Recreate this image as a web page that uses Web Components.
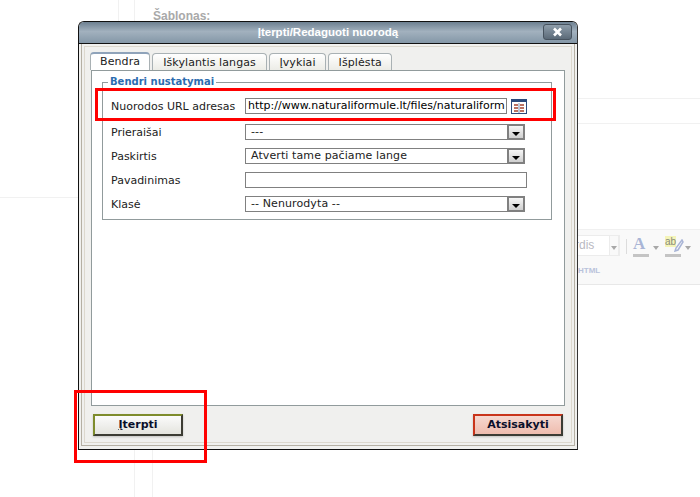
<!DOCTYPE html>
<html lang="lt">
<head>
<meta charset="utf-8">
<title>Įterpti/Redaguoti nuorodą</title>
<style>
  html, body { margin: 0; height: 100%; background: #fff; overflow: hidden; }
</style>
</head>
<body>
<editor-backdrop></editor-backdrop>
<link-dialog></link-dialog>
<mark-box style="left:95px;top:88px;width:455px;height:27px"></mark-box>
<mark-box style="left:74px;top:390px;width:127px;height:67px"></mark-box>

<script>
//////////////////////
// editor-backdrop
//////////////////////

class EditorBackdrop extends HTMLElement {
  constructor() {
    super();
    this.attachShadow({ mode: "open" });
    this.shadowRoot.innerHTML = `<style>
      :host { display: block; position: absolute; inset: 0; font-family: "Liberation Sans", sans-serif; }
      .line { position: absolute; background: #f1f1f1; }
      .title { position: absolute; left: 153px; top: 9px; font-size: 12px; font-weight: bold; color: #a9a9a9; }
      .bar { position: absolute; left: 570px; right: 0; top: 229px; height: 56px; background: #f9f9f9; border-top: 1px solid #f0f0f0; border-bottom: 1px solid #e8e8e8; box-sizing: border-box; }
      .font { position: absolute; left: 0; top: 5px; width: 50px; height: 21px; background: #fff; border: 1px solid #ececec; box-sizing: border-box; font-size: 12px; line-height: 19px; color: #b9b9c2; padding-left: 4px; }
      .drop { position: absolute; left: 39px; top: 5px; width: 10px; height: 21px; box-sizing: border-box; background: #f9f9f9; border: 1px solid #ececec; }
      .arrow { position: absolute; top: 16px; width: 0; height: 0; border: 3px solid transparent; border-top: 4px solid #a8a8a8; border-bottom: 0; }
      .sep { position: absolute; left: 56px; top: 9px; width: 1px; height: 15px; background: #dcdcdc; }
      .a { position: absolute; left: 63px; top: 5px; font: bold 17px/18px "Liberation Serif", serif; color: #a9b5d6; }
      .u { position: absolute; left: 63px; top: 24px; width: 16px; height: 3px; background: #c4c4c4; }
      .ab { position: absolute; left: 95px; top: 6px; font-size: 10px; line-height: 11px; color: #8b8b7a; background: #f4f4b8; }
      .pen { position: absolute; left: 104px; top: 9px; }
      .u2 { position: absolute; left: 95px; top: 24px; width: 16px; height: 3px; background: #c4c4c4; }
      .html { position: absolute; left: 8px; top: 36px; font-size: 8px; font-weight: bold; color: #b9c3dc; }
    </style>
    <div class="line" style="left:118px;top:0;width:1px;height:22px"></div>
    <div class="line" style="left:134px;top:0;width:1px;height:22px"></div>
    <div class="line" style="left:134px;top:450px;width:1px;height:47px"></div>
    <div class="line" style="left:152px;top:450px;width:1px;height:47px"></div>
    <div class="line" style="left:0;top:197px;width:78px;height:1px"></div>
    <div class="line" style="left:578px;top:98px;right:0;height:1px"></div>
    <div class="line" style="left:578px;top:123px;right:0;height:1px"></div>
    <div class="title">Šablonas:</div>
    <div class="bar">
      <div class="font">rdis</div>
      <div class="drop"></div>
      <div class="arrow" style="left:41px"></div>
      <div class="sep"></div>
      <div class="a">A</div><div class="u"></div>
      <div class="arrow" style="left:83px"></div>
      <div class="ab">ab</div>
      <svg class="pen" width="10" height="13" viewBox="0 0 10 13"><path d="M8 1 2 9l-1 3 3-1 5-8z" fill="none" stroke="#a9b5d6" stroke-width="1.5"/></svg>
      <div class="u2"></div>
      <div class="arrow" style="left:115px"></div>
      <div class="html">HTML</div>
    </div>`;
  }
}

//////////////////////
// mark-box
//////////////////////

class MarkBox extends HTMLElement {
  constructor() {
    super();
    this.attachShadow({ mode: "open" });
    this.shadowRoot.innerHTML = `<style>
      :host { display: block; position: absolute; border: 3px solid #f00; pointer-events: none; }
    </style>`;
  }
}

//////////////////////
// dialog-tab
//////////////////////

class DialogTab extends HTMLElement {
  constructor() {
    super();
    this.attachShadow({ mode: "open" });
    this.shadowRoot.innerHTML = `<style>
      :host {
        display: block; box-sizing: border-box; height: 17px; margin-top: 1px; padding: 0 10px;
        border: 1px solid #a9b1b4; border-bottom: 0; border-radius: 4px 4px 0 0; white-space: nowrap;
        background: linear-gradient(#fff, #ecece6); font-size: 11px; line-height: 17px; letter-spacing: .1px; color: #222;
      }
      :host([active]) {
        height: 18px; margin-top: 0; margin-bottom: -1px; position: relative; background: #fff;
        border-top: 2px solid #8fa3ba; padding: 0 9px; line-height: 16px;
      }
      :host([narrow]) { padding: 0 9.5px; }
    </style><slot></slot>`;
  }
}

//////////////////////
// form-row
//////////////////////

class FormRow extends HTMLElement {
  constructor() {
    super();
    this.attachShadow({ mode: "open" });
    this.shadowRoot.innerHTML = `<style>
      :host { display: flex; align-items: center; height: 24px; font-size: 11px; color: #222; }
      .label { width: 134px; flex: none; white-space: nowrap; }
      .field { display: flex; align-items: center; gap: 4px; }
    </style>
    <div class="label">${this.getAttribute("label") || ""}</div>
    <div class="field"><slot></slot></div>`;
  }
}

//////////////////////
// text-box
//////////////////////

class TextBox extends HTMLElement {
  constructor() {
    super();
    this.attachShadow({ mode: "open" });
    this.shadowRoot.innerHTML = `<style>
      :host {
        display: block; box-sizing: border-box; height: 16px; border: 1px solid #808080; background: #fff;
        padding-left: 2px; font-size: 11px; line-height: 14px; color: #000;
        white-space: nowrap;
      }
    </style><slot></slot>`;
  }
}

//////////////////////
// select-box
//////////////////////

class SelectBox extends HTMLElement {
  constructor() {
    super();
    this.attachShadow({ mode: "open" });
    this.shadowRoot.innerHTML = `<style>
      :host {
        display: flex; box-sizing: border-box; width: 280px; height: 16px; border: 1px solid #808080; background: #fff;
        padding-left: 5px; font-size: 11px; line-height: 14px; letter-spacing: .1px; color: #222;
      }
      .text { flex: 1; white-space: nowrap; }
      .btn {
        flex: none; width: 18px; height: 16px; margin: -1px -1px 0 0; box-sizing: border-box; border: 2px solid #808080;
        background: linear-gradient(#f6f6f6, #cfcfcf); display: flex; align-items: center; justify-content: center;
      }
      .btn i { width: 0; height: 0; border: 4px solid transparent; border-top: 4px solid #000; border-bottom: 0; margin-top: 3px; }
    </style><div class="text"><slot></slot></div><div class="btn"><i></i></div>`;
  }
}

//////////////////////
// dialog-button
//////////////////////

class DialogButton extends HTMLElement {
  constructor() {
    super();
    this.attachShadow({ mode: "open" });
    const red = this.hasAttribute("danger");
    this.shadowRoot.innerHTML = `<style>
      :host {
        display: block; box-sizing: border-box; width: 90px; height: 22px; text-align: center;
        border: 2px solid ${red ? "#c9341a" : "#7e8c2c"}; border-right-color: #3c3c34; border-bottom-color: #3c3c34;
        background: linear-gradient(${red ? "#f6d8d0, #eebcae" : "#fbfbfb, #e4e4de"});
        box-shadow: 0 1px 2px rgba(0,0,0,.2);
        font-size: 11px; font-weight: bold; line-height: 18px; color: #0a0f2a;
      }
    </style><slot></slot>`;
  }
}

//////////////////////
// link-dialog
//////////////////////

class LinkDialog extends HTMLElement {
  constructor() {
    super();
    this.attachShadow({ mode: "open" });
    this.shadowRoot.innerHTML = `<style>
      :host {
        display: flex; flex-direction: column; position: absolute; left: 78px; top: 21px; width: 500px; height: 429px; box-sizing: border-box;
        border: 1px solid #111; border-right-color: #333; border-radius: 6px 6px 0 0; background: #f0f0ee;
        font-family: "DejaVu Sans", Verdana, sans-serif; overflow: hidden;
      }
      .title {
        flex: none; position: relative; height: 22px; box-sizing: border-box; border-bottom: 1px solid #111;
        background: linear-gradient(#6d8091, #a2b1be 45%, #8497a7);
        color: #fff; text-align: center; font: bold 11.5px/20px "Liberation Sans", sans-serif;
      }
      .close {
        position: absolute; right: 5px; top: 2px; width: 29px; height: 16px; box-sizing: border-box;
        border: 1px solid #47535f; border-radius: 3px; background: linear-gradient(#8e9daa, #5b6a78);
        display: flex; align-items: center; justify-content: center;
      }
      .frame {
        flex: 1; display: flex; flex-direction: column; min-height: 0; margin: 0 2px 3px; padding: 8px 8px 9px 9px;
        border: 1px solid #b5b0a4; border-top: 0; outline: 0; box-shadow: inset 0 0 0 2px #f0f0ee, inset 0 0 0 3px #dcd8ce;
      }
      .tabs { display: flex; gap: 2px; flex: none; height: 18px; margin-left: -1px; }
      .panel {
        flex: 1; min-height: 0; margin-right: 1px; padding: 11px 10px; border: 1px solid #919b9c; background: #fff;
      }
      .group { position: relative; margin-right: 2px; height: 138px; box-sizing: border-box; border: 1px solid #919b9c; padding: 11px 0 0 8px; }
      .legend {
        position: absolute; left: 5px; top: -8px; padding: 0 2px; background: #fff;
        font-size: 10px; font-weight: bold; line-height: 13px; color: #2b6cb0;
      }
      .first { margin-bottom: 2px; }
      .actions { flex: none; display: flex; justify-content: space-between; padding: 8px 3px 0 2px; }
      u { text-decoration: underline; }
    </style>
    <div class="title">Įterpti/Redaguoti nuorodą
      <div class="close">
        <svg width="11" height="10" viewBox="0 0 11 10"><path d="M2 1.5l7 7M9 1.5l-7 7" stroke="#fff" stroke-width="2.6"/></svg>
      </div>
    </div>
    <div class="frame">
      <div class="tabs">
        <dialog-tab active>Bendra</dialog-tab>
        <dialog-tab>Iškylantis langas</dialog-tab>
        <dialog-tab narrow>Įvykiai</dialog-tab>
        <dialog-tab narrow>Išplėsta</dialog-tab>
      </div>
      <div class="panel">
        <div class="group">
          <div class="legend">Bendri nustatymai</div>
          <form-row class="first" label="Nuorodos URL adresas">
            <text-box style="width:262px">http://www.naturaliformule.lt/files/naturaliform</text-box>
            <svg width="16" height="15" viewBox="0 0 16 15">
              <rect x=".5" y=".5" width="15" height="14" fill="#fff" stroke="#2b4a7c"/>
              <rect x="1" y="1" width="14" height="2" fill="#2b4a7c"/>
              <path d="M3 6h4M9 6h4M3 9h4M9 9h4M3 12h4M9 12h4" stroke="#a5442f" stroke-width="1.6"/>
              <path d="M8 4v10" stroke="#2b4a7c" stroke-width=".6"/>
            </svg>
          </form-row>
          <form-row label="Prieraišai"><select-box>---</select-box></form-row>
          <form-row label="Paskirtis"><select-box>Atverti tame pačiame lange</select-box></form-row>
          <form-row label="Pavadinimas"><text-box style="width:282px"></text-box></form-row>
          <form-row label="Klasė"><select-box>-- Nenurodyta --</select-box></form-row>
        </div>
      </div>
      <div class="actions">
        <dialog-button><u>Į</u>terpti</dialog-button>
        <dialog-button danger>Atsisakyti</dialog-button>
      </div>
    </div>`;
  }
}

customElements.define("editor-backdrop", EditorBackdrop);
customElements.define("mark-box", MarkBox);
customElements.define("dialog-tab", DialogTab);
customElements.define("form-row", FormRow);
customElements.define("text-box", TextBox);
customElements.define("select-box", SelectBox);
customElements.define("dialog-button", DialogButton);
customElements.define("link-dialog", LinkDialog);
</script>
</body>
</html>
